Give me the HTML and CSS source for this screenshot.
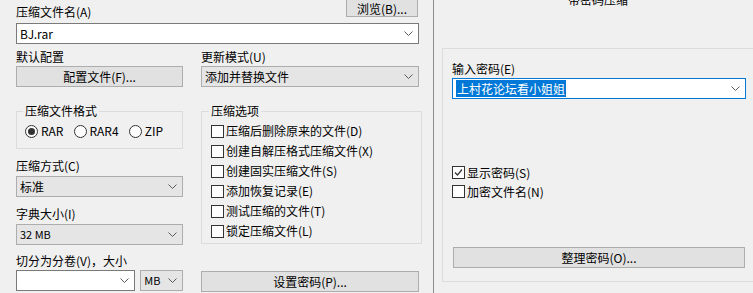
FILE: index.html
```html
<html>
  <head>
    <title>带密码压缩</title>
    <link rel="stylesheet" href="styles.css">
  </head>
  <body>
    <div class="dialog">
      <div class="main">
        <div class="head">
          <span>压缩文件名(A)</span>
          <span class="btn browse">浏览(B)...</span>
        </div>
        <div class="combo edit">BJ.rar<svg class="arrow" width="9" height="5"><polyline points="0.5,0.5 4.5,4.5 8.5,0.5"/></svg></div>
        <div class="cols">
          <div class="col narrow">
            <div class="lbl">默认配置</div>
            <div class="btn ctl">配置文件(F)...</div>
            <fieldset class="group fmt">
              <legend>压缩文件格式</legend>
              <div class="radios">
                <span class="opt"><i class="radio on"></i>RAR</span>
                <span class="opt"><i class="radio"></i>RAR4</span>
                <span class="opt"><i class="radio"></i>ZIP</span>
              </div>
            </fieldset>
            <div class="lbl m9">压缩方式(C)</div>
            <div class="combo list">标准<svg class="arrow" width="9" height="5"><polyline points="0.5,0.5 4.5,4.5 8.5,0.5"/></svg></div>
            <div class="lbl m9">字典大小(I)</div>
            <div class="combo list small">32 MB<svg class="arrow" width="9" height="5"><polyline points="0.5,0.5 4.5,4.5 8.5,0.5"/></svg></div>
            <div class="lbl m8">切分为分卷(V)，大小</div>
            <div class="split">
              <div class="combo edit vol"><svg class="arrow" width="9" height="5"><polyline points="0.5,0.5 4.5,4.5 8.5,0.5"/></svg></div>
              <div class="combo list unit small">MB<svg class="arrow" width="9" height="5"><polyline points="0.5,0.5 4.5,4.5 8.5,0.5"/></svg></div>
            </div>
          </div>
          <div class="col wide">
            <div class="lbl">更新模式(U)</div>
            <div class="combo list">添加并替换文件<svg class="arrow" width="9" height="5"><polyline points="0.5,0.5 4.5,4.5 8.5,0.5"/></svg></div>
            <fieldset class="group opts">
              <legend>压缩选项</legend>
              <div class="check"><i class="box"></i>压缩后删除原来的文件(D)</div>
              <div class="check"><i class="box"></i>创建自解压格式压缩文件(X)</div>
              <div class="check"><i class="box"></i>创建固实压缩文件(S)</div>
              <div class="check"><i class="box"></i>添加恢复记录(E)</div>
              <div class="check"><i class="box"></i>测试压缩的文件(T)</div>
              <div class="check"><i class="box"></i>锁定压缩文件(L)</div>
            </fieldset>
            <div class="btn ctl setpw">设置密码(P)...</div>
          </div>
        </div>
      </div>
      <div class="side">
        <div class="title">带密码压缩</div>
        <div class="panel">
          <div class="lbl">输入密码(E)</div>
          <div class="combo edit focus"><span class="sel">上村花论坛看小姐姐</span><svg class="arrow" width="9" height="5"><polyline points="0.5,0.5 4.5,4.5 8.5,0.5"/></svg></div>
          <div class="check first"><i class="box"><svg width="11" height="11"><polyline points="2,5.5 4.5,8 9,2.5"/></svg></i>显示密码(S)</div>
          <div class="check row"><i class="box"></i>加密文件名(N)</div>
          <div class="btn organize">整理密码(O)...</div>
        </div>
      </div>
    </div>
  </body>
</html>
```
FILE: styles.css
```css
body {
  margin: 0;
  background: #f0f0f0;
  font: 12px/16px "Noto Sans CJK SC", "Microsoft YaHei", sans-serif;
  color: #000;
  overflow: hidden;
}
.dialog { display: flex; width: 753px; height: 293px; }

.main {
  width: 433px;
  box-sizing: border-box;
  padding: 0 14px 0 16px;
  flex: none;
}
.head {
  display: flex;
  justify-content: space-between;
  align-items: flex-end;
  height: 20px;
}
.btn {
  box-sizing: border-box;
  height: 21px;
  line-height: 19px;
  background: #e1e1e1;
  border: 1px solid #adadad;
  text-align: center;
}
.browse { width: 72px; line-height: 16px; padding-top: 4px; margin: 0 1px 3px 0; }

.combo {
  position: relative;
  box-sizing: border-box;
  height: 21px;
  line-height: 19px;
  padding-left: 3px;
  border: 1px solid #adadad;
  background: #e5e5e5;
  white-space: nowrap;
}
.combo.edit { background: #fff; border-color: #7a7a7a; margin-top: 3px; }
.combo.small { font-size: 11px; }
.arrow {
  position: absolute;
  right: 5px;
  top: 7px;
  fill: none;
  stroke: #5a5a5a;
  stroke-width: 1;
}

.cols { display: flex; gap: 18px; margin-top: 5px; }
.col { display: flex; flex-direction: column; }
.narrow { width: 167px; }
.wide { width: 218px; }
.lbl { height: 16px; }
.m9 { margin-top: 9px; }
.m8 { margin-top: 8px; }
.lbl + .combo, .lbl + .btn { margin-top: 1px; }
.m9 + .combo { margin-top: 2px; }

.group {
  margin: 16px 0 0;
  padding: 0 8px 9px;
  border: 1px solid #dcdcdc;
  min-width: 0;
}
.group legend { padding: 0 2px; margin-left: -2px; line-height: 16px; }
.radios { display: flex; gap: 10px; margin-top: 4px; height: 16px; align-items: center; }
.opt { display: flex; align-items: center; gap: 3px; }
.radio {
  width: 11px;
  height: 11px;
  border: 1px solid #333;
  border-radius: 50%;
  background: #fff;
  position: relative;
}
.radio.on::after {
  content: "";
  position: absolute;
  left: 2px;
  top: 2px;
  width: 7px;
  height: 7px;
  border-radius: 50%;
  background: #333;
}

.opts { width: 221px; box-sizing: border-box; padding: 2px 9px 2px; margin-right: -3px; }
.check { display: flex; align-items: center; gap: 2px; height: 20px; }
.box {
  width: 11px;
  height: 11px;
  border: 1px solid #333;
  background: #fff;
  flex: none;
}
.box svg { display: block; fill: none; stroke: #333; stroke-width: 1.2; }
.setpw { margin-top: 27px; }

.split { display: flex; gap: 5px; margin-top: 1px; }
.split .combo { margin-top: 0; }
.vol { width: 120px; }
.unit { width: 43px; }

.side {
  flex: 1;
  border-left: 1px solid #8c8c8c;
  overflow: hidden;
}
.title { width: 328px; text-align: center; margin-top: -8px; }
.panel {
  margin: 40px 0 0 8px;
  width: 330px;
  height: 234px;
  box-sizing: border-box;
  border: 1px solid #dcdcdc;
  padding: 12px 0 0 9px;
}
.combo.focus { width: 294px; border-color: #0078d7; margin-top: 1px; }
.sel { background: #0078d7; color: #fff; padding: 0 1px; }
.panel .check { height: 19px; }
.panel .first { margin-top: 64px; }
.organize { width: 292px; margin: 46px 0 0 1px; }
```
